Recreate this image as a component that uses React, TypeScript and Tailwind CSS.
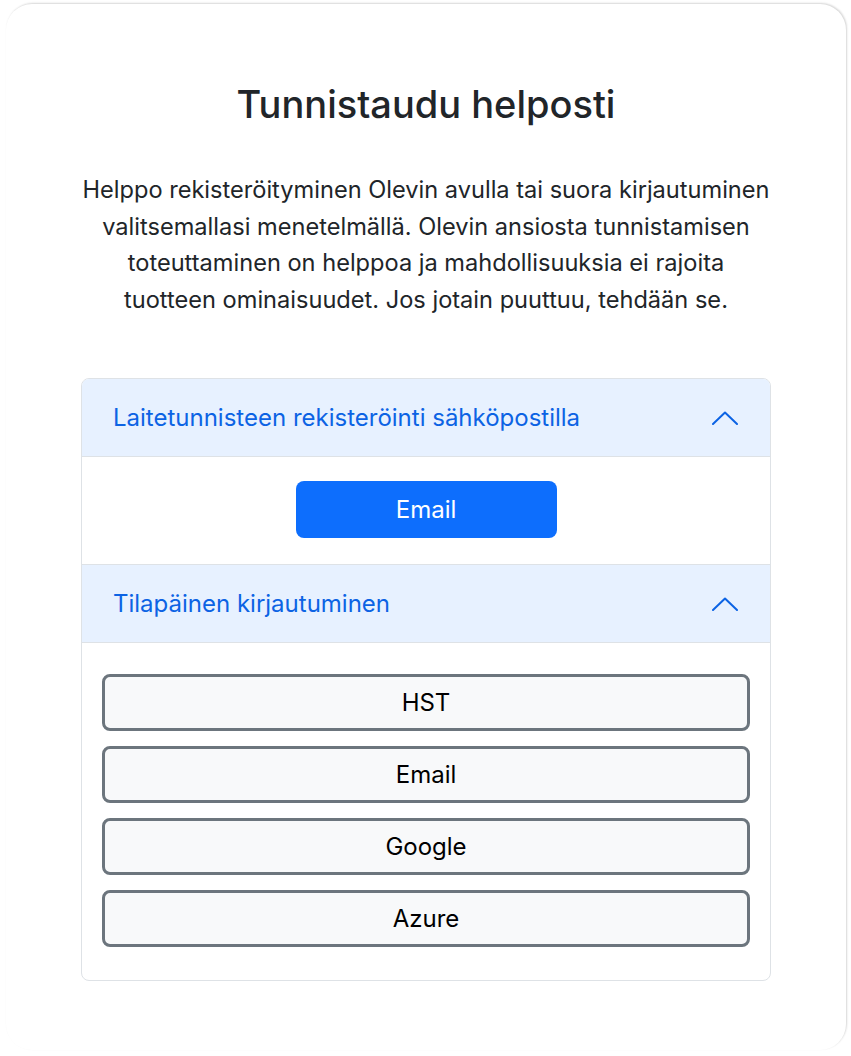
import React, { useState } from "react";

const Chevron = ({ open }: { open: boolean }) => (
  <svg
    width="26"
    height="14"
    viewBox="0 0 26 14"
    fill="none"
    className={open ? "" : "rotate-180"}
  >
    <polyline
      points="1,13 13,1.5 25,13"
      stroke="#0c63e4"
      strokeWidth="2"
      strokeLinecap="round"
      strokeLinejoin="round"
    />
  </svg>
);

const Section = ({
  title,
  children,
  last,
}: {
  title: string;
  children: React.ReactNode;
  last?: boolean;
}) => {
  const [open, setOpen] = useState(true);
  return (
    <div className={last ? "" : "border-b border-[#dee2e6]"}>
      <button
        onClick={() => setOpen(!open)}
        className="flex w-full items-center justify-between bg-[#e7f1ff] pl-[31px] pr-8 h-[78px] border-b border-[#dee2e6] text-left text-[24px] text-[#0c63e4]"
      >
        <span>{title}</span>
        <Chevron open={open} />
      </button>
      {open && children}
    </div>
  );
};

const App = () => {
  const tempLogins = ["HST", "Email", "Google", "Azure"];

  return (
    <div className="min-h-[1056px] bg-white pt-1 pl-[6px] pr-[5px] pb-[6px] font-['Inter',sans-serif]">
      <div className="min-h-[1046px] rounded-[26px] bg-white shadow-[1px_-1px_2px_rgba(0,0,0,0.16)] px-[75px] pt-[76px]">
        <h2 className="text-center text-[38px] font-medium leading-[48px] text-[#212529]">
          Tunnistaudu helposti
        </h2>
        <p className="mt-[44px] text-center text-[23.6px] leading-[36.5px] text-[#212529]">
          Helppo rekisteröityminen Olevin avulla tai suora kirjautuminen
          valitsemallasi menetelmällä. Olevin ansiosta tunnistamisen
          toteuttaminen on helppoa ja mahdollisuuksia ei rajoita tuotteen
          ominaisuudet. Jos jotain puuttuu, tehdään se.
        </p>

        <div className="mt-[60px] overflow-hidden rounded-lg border border-[#dee2e6]">
          <Section title="Laitetunnisteen rekisteröinti sähköpostilla">
            <div className="flex justify-center pt-6 pb-[26px]">
              <button className="h-[57px] w-[261px] rounded-lg bg-[#0d6efd] text-[24px] text-white">
                Email
              </button>
            </div>
          </Section>
          <Section title="Tilapäinen kirjautuminen" last>
            <div className="flex flex-col gap-[15px] px-5 pt-[31px] pb-[33px]">
              {tempLogins.map((name) => (
                <button
                  key={name}
                  className="h-[57px] w-full rounded-lg border-[3px] border-[#6c757d] bg-[#f8f9fa] text-[24px] text-black"
                >
                  {name}
                </button>
              ))}
            </div>
          </Section>
        </div>
      </div>
    </div>
  );
};

export default App;
